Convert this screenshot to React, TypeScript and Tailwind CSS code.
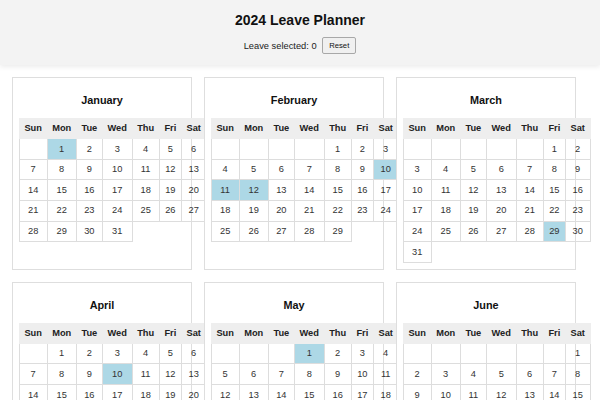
const YEAR = 2024;

const monthNames = [
  "January", "February", "March", "April", "May", "June",
  "July", "August", "September", "October", "November", "December",
];

const weekDays = ["Sun", "Mon", "Tue", "Wed", "Thu", "Fri", "Sat"];

// public holidays shown in blue
const holidays = new Set([
  "0-1", "1-10", "1-11", "1-12", "2-29", "3-10", "4-1",
  "7-9", "9-31", "11-25", "11-26",
]);

function buildWeeks(month: number) {
  const first = new Date(YEAR, month, 1).getDay();
  const total = new Date(YEAR, month + 1, 0).getDate();
  const weeks: (number | null)[][] = [];
  let week: (number | null)[] = Array(first).fill(null);
  for (let d = 1; d <= total; d++) {
    week.push(d);
    if (week.length === 7) {
      weeks.push(week);
      week = [];
    }
  }
  if (week.length) weeks.push(week);
  return weeks;
}

function MonthCard({ month }: { month: number }) {
  const weeks = buildWeeks(month);
  return (
    <div className="border border-[#dedede] bg-white p-[5.8px]">
      <h3 className="mt-[10.6px] mb-[12px] text-center text-[10.86px] font-bold leading-[normal] text-[#111]">
        {monthNames[month]}
      </h3>
      <table className="border-collapse text-[9.28px] leading-[10.7px]">
        <thead>
          <tr>
            {weekDays.map((d) => (
              <th
                key={d}
                className="border border-[#eeeeee] bg-[#eeeeee] px-[4.64px] py-[4px] font-bold text-[#222]"
              >
                {d}
              </th>
            ))}
          </tr>
        </thead>
        <tbody>
          {weeks.map((week, i) => (
            <tr key={i}>
              {week.map((day, j) => (
                <td
                  key={j}
                  className={`border border-[#dddddd] px-[4.64px] py-[4.48px] text-center text-[#333] ${
                    day && holidays.has(`${month}-${day}`) ? "bg-[#add8e6]" : ""
                  }`}
                >
                  {day ?? ""}
                </td>
              ))}
            </tr>
          ))}
        </tbody>
      </table>
    </div>
  );
}

export default function App() {
  return (
    <div className="min-h-screen bg-white font-['Liberation_Sans',Arial,sans-serif] text-[#111]">
      <header className="bg-[#f3f3f3] pt-[11.6px] pb-[10.8px] text-center shadow-[0_2px_5px_rgba(0,0,0,0.08)]">
        <h1 className="mb-[9.6px] text-[14px] font-bold leading-[normal]">
          2024 Leave Planner
        </h1>
        <div className="flex items-center justify-center text-[9.3px] leading-[normal] text-[#222]">
          <span>Leave selected: 0</span>
          <button className="ml-[5.6px] rounded-[2px] border border-[#a8a8a8] bg-[#f0f0f0] px-[6px] py-[3px] text-[7.7px] leading-[normal] text-[#111]">
            Reset
          </button>
        </div>
      </header>

      <main className="grid grid-cols-[repeat(3,180px)] gap-[12px] px-[12px] pt-[12px] pb-[12px]">
        {monthNames.map((_, m) => (
          <MonthCard key={m} month={m} />
        ))}
      </main>
    </div>
  );
}
